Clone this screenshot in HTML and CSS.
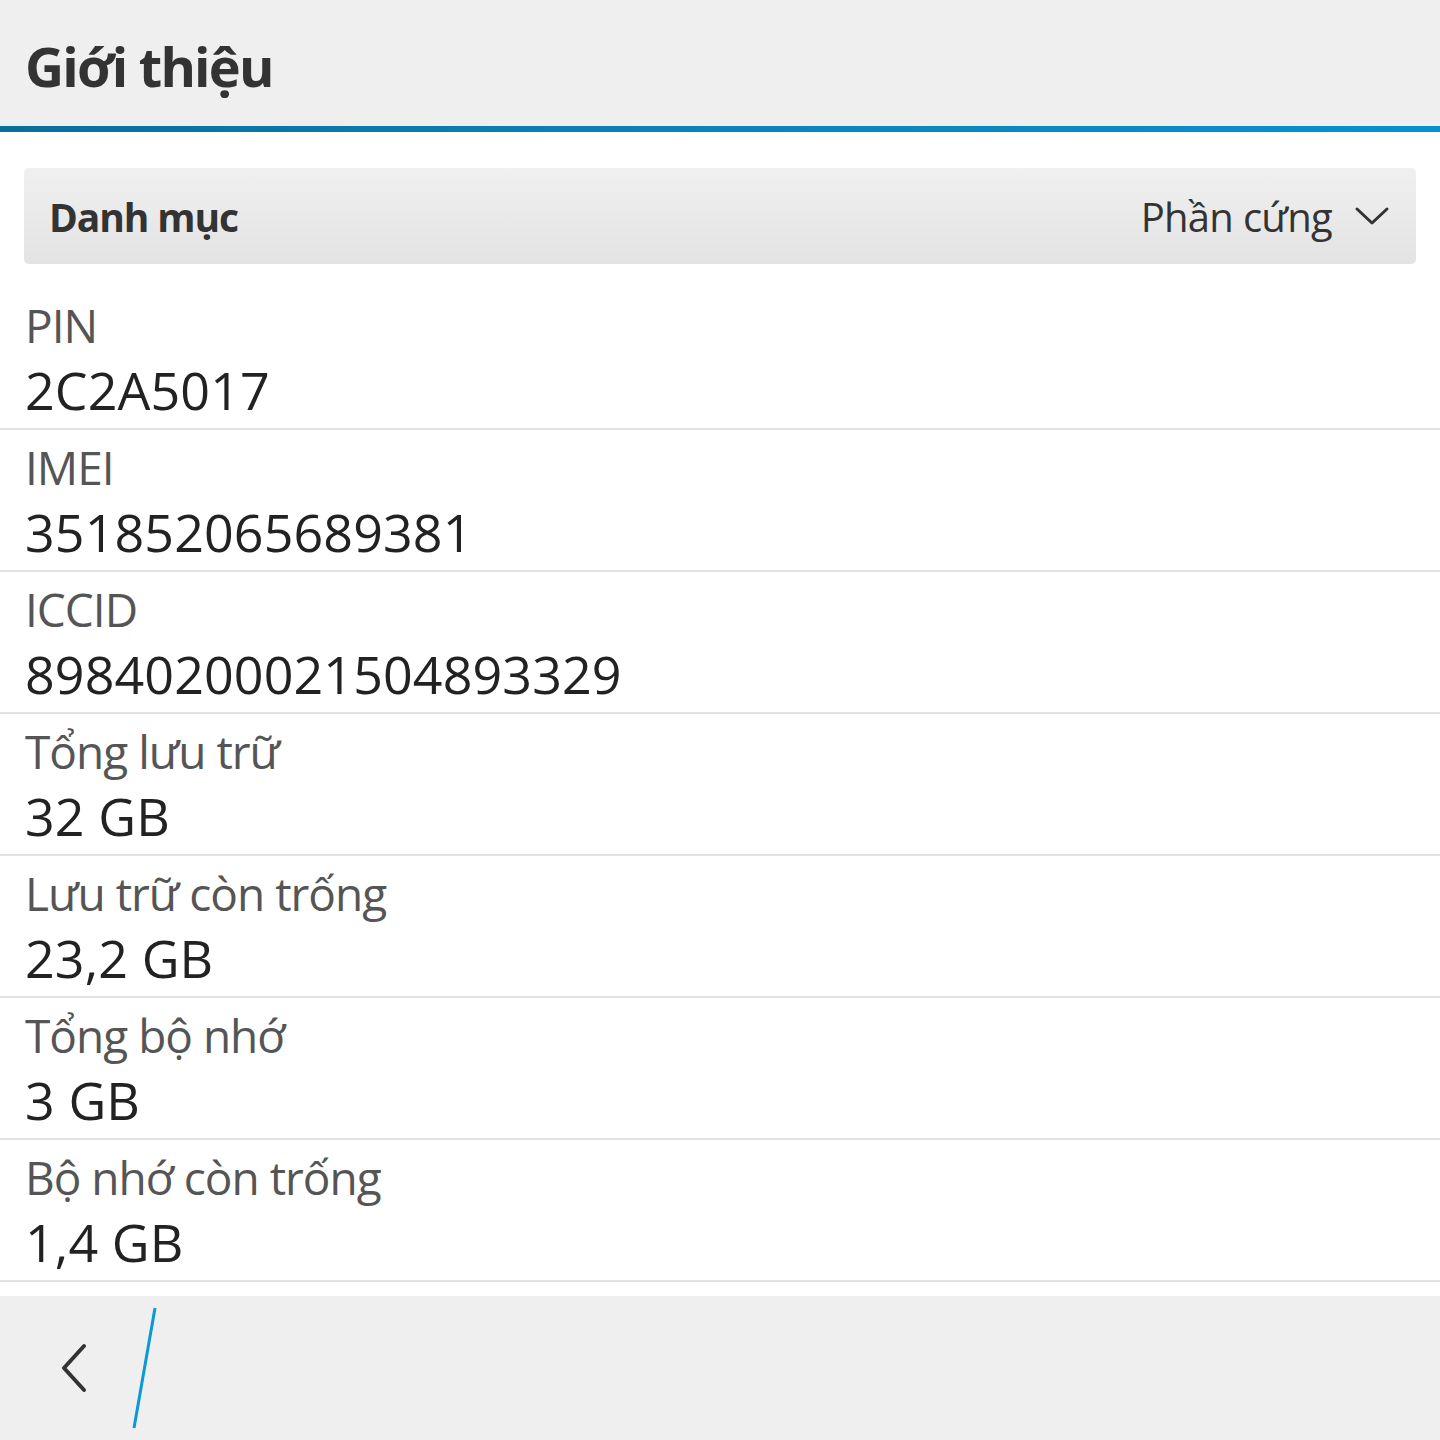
FILE: index.html
```html
<!DOCTYPE html>
<html lang="vi">
<head>
<meta charset="utf-8">
<title>Giới thiệu</title>
<link rel="stylesheet" href="styles.css">
</head>
<body>
<div class="screen">
  <header class="titlebar">
    <h1 class="title">Giới thiệu</h1>
  </header>
  <div class="accent"></div>
  <main class="content">
    <div class="dropdown">
      <span class="dd-label">Danh mục</span>
      <span class="dd-value">Phần cứng
        <svg class="chev-down" width="36" height="20" viewBox="0 0 36 20"><path d="M3 3 L18 17 L33 3" fill="none" stroke="#333" stroke-width="3" stroke-linecap="round" stroke-linejoin="round"/></svg>
      </span>
    </div>
    <ul class="list">
      <li class="row"><div class="label">PIN</div><div class="value">2C2A5017</div></li>
      <li class="row"><div class="label">IMEI</div><div class="value">351852065689381</div></li>
      <li class="row"><div class="label">ICCID</div><div class="value">89840200021504893329</div></li>
      <li class="row"><div class="label">Tổng lưu trữ</div><div class="value">32 GB</div></li>
      <li class="row"><div class="label">Lưu trữ còn trống</div><div class="value">23,2 GB</div></li>
      <li class="row"><div class="label">Tổng bộ nhớ</div><div class="value">3 GB</div></li>
      <li class="row"><div class="label">Bộ nhớ còn trống</div><div class="value">1,4 GB</div></li>
    </ul>
  </main>
  <footer class="actionbar">
    <button class="back" aria-label="Quay lại">
      <svg width="40" height="60" viewBox="0 0 40 60"><path d="M32 8 L12 30 L32 52" fill="none" stroke="#333" stroke-width="4" stroke-linecap="round" stroke-linejoin="round"/></svg>
    </button>
    <svg class="slash" width="30" height="124" viewBox="0 0 30 124"><path d="M25 2 L4 122" stroke="#0a98d6" stroke-width="3"/></svg>
  </footer>
</div>
</body>
</html>
```
FILE: styles.css
```css
* { box-sizing: border-box; }
html, body { margin: 0; padding: 0; }
body {
  font-family: "Open Sans", "Noto Sans", sans-serif;
  background: #ffffff;
  color: #222;
}
.screen {
  width: 1440px;
  height: 1440px;
  display: flex;
  flex-direction: column;
  overflow: hidden;
}
.titlebar {
  height: 126px;
  background: #efefef;
  display: flex;
  align-items: center;
  padding-left: 25px;
}
.title {
  margin: 0;
  font-size: 54px;
  font-weight: 700;
  color: #333;
  line-height: 1;
  padding-top: 6px;
  letter-spacing: -1.8px;
}
.accent {
  height: 6px;
  background: linear-gradient(to right, #0a6e9c, #0a84ba 50%, #0591d0);
}
.content {
  flex: 1;
  padding-top: 36px;
}
.dropdown {
  margin: 0 24px;
  height: 96px;
  border-radius: 5px;
  background: linear-gradient(#f0f0f0, #e3e3e3);
  display: flex;
  align-items: center;
  justify-content: space-between;
  padding: 0 26px 0 25px;
  color: #333;
}
.dd-label {
  font-size: 39px;
  font-weight: 700;
  letter-spacing: -1.1px;
}
.dd-value {
  font-size: 40px;
  letter-spacing: -0.7px;
  display: flex;
  align-items: center;
  gap: 22px;
}
.chev-down { display: block; }
.list {
  list-style: none;
  margin: 24px 0 0;
  padding: 0;
}
.row {
  height: 142px;
  border-bottom: 2px solid #e2e2e2;
  padding: 7px 25px 0;
}
.label {
  font-size: 46px;
  line-height: 60px;
  color: #555;
  letter-spacing: -1px;
}
.value {
  font-size: 52px;
  line-height: 64px;
  margin-top: 3px;
  color: #222;
  letter-spacing: 0.1px;
}
.actionbar {
  height: 144px;
  background: #efefef;
  display: flex;
  align-items: center;
  margin-top: 14px;
}
.back {
  background: none;
  border: 0;
  padding: 0;
  margin-left: 52px;
  width: 40px;
  height: 60px;
  display: flex;
  align-items: center;
  justify-content: center;
}
.slash {
  display: block;
  margin-left: 38px;
}
```
